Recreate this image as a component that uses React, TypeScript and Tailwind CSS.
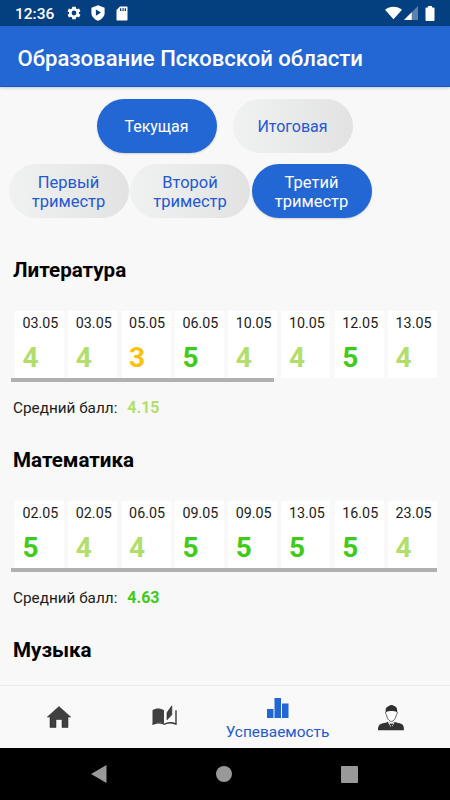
import { useState } from "react";
import { cva } from "class-variance-authority";
import { clsx } from "clsx";

interface Mark {
  date: string;
  value: number;
}

interface Subject {
  name: string;
  marks: Mark[];
  average: string;
  scrollClass: string;
}

const subjects: Subject[] = [
  {
    name: "Литература",
    average: "4.15",
    scrollClass: "w-[263px]",
    marks: [
      { date: "03.05", value: 4 },
      { date: "03.05", value: 4 },
      { date: "05.05", value: 3 },
      { date: "06.05", value: 5 },
      { date: "10.05", value: 4 },
      { date: "10.05", value: 4 },
      { date: "12.05", value: 5 },
      { date: "13.05", value: 4 },
    ],
  },
  {
    name: "Математика",
    average: "4.63",
    scrollClass: "w-[426px]",
    marks: [
      { date: "02.05", value: 5 },
      { date: "02.05", value: 4 },
      { date: "06.05", value: 4 },
      { date: "09.05", value: 5 },
      { date: "09.05", value: 5 },
      { date: "13.05", value: 5 },
      { date: "16.05", value: 5 },
      { date: "23.05", value: 4 },
    ],
  },
  { name: "Музыка", average: "", scrollClass: "", marks: [] },
];

const periods = ["Первый триместр", "Второй триместр", "Третий триместр"];

function markColor(value: number) {
  if (value >= 4.5) return "text-[#3fcb18]";
  if (value >= 3.5) return "text-[#b1de6c]";
  return "text-[#ffc107]";
}

const pill = cva(
  "flex h-[54px] w-[120px] items-center justify-center rounded-full px-4 pt-[2px] text-center leading-[19px]",
  {
    variants: {
      active: {
        true: "bg-[#2367d5] text-white shadow-[0_1px_2px_rgba(0,0,0,0.15)]",
        false: "bg-linear-to-r from-[#f0f2f2] to-[#e2e2e3] text-[#2359d3]",
      },
      size: {
        view: "text-[16px]",
        period: "text-[16.5px]",
      },
    },
  },
);

function StatusBar() {
  return (
    <div className="flex h-[26px] shrink-0 items-center bg-[#04407f] pr-[15px] pl-[15px] text-white">
      <span className="w-[40px] pt-[3px] text-[15.5px] leading-none font-medium">12:36</span>
      <svg className="ml-[11px] size-4" viewBox="0 0 24 24" fill="currentColor">
        <path d="M19.4 13a7.5 7.5 0 0 0 0-2l2.3-1.8-2.2-3.9-2.8 1.1a8 8 0 0 0-1.7-1L14.6 2.5H9.4L9 5.4a8 8 0 0 0-1.7 1L4.5 5.3 2.3 9.2 4.6 11a7.5 7.5 0 0 0 0 2l-2.3 1.8 2.2 3.9 2.8-1.1a8 8 0 0 0 1.7 1l.4 2.9h5.2l.4-2.9a8 8 0 0 0 1.7-1l2.8 1.1 2.2-3.9zM12 15.6a3.6 3.6 0 1 1 0-7.2 3.6 3.6 0 0 1 0 7.2z" />
      </svg>
      <svg className="ml-2 size-4" viewBox="0 0 16 16">
        <path d="M8 .3 14.6 2.8v5.2c0 3.4-2.7 6.2-6.6 7.8-3.9-1.6-6.6-4.4-6.6-7.8V2.8z" fill="currentColor" />
        <path d="M5.9 4.5v6.2L11 7.6z" fill="#04407f" />
      </svg>
      <svg className="ml-[10px] h-[15px] w-3" viewBox="0 0 12 15">
        <path d="M4 .5h6.5c.6 0 1 .4 1 1v12c0 .6-.4 1-1 1h-9c-.6 0-1-.4-1-1V4z" fill="currentColor" />
        <path d="M4 2.2h1.3v2.8H4zm2.400 0h1.300v2.800H6.400zm2.300 0H10v2.800H8.700z" fill="#04407f" />
      </svg>
      <svg className="ml-auto h-[14px] w-[17px]" viewBox="0 0 18 14" fill="currentColor">
        <path d="M0 3.5C5 -.7 13 -.7 18 3.5L9 13.5z" />
      </svg>
      <svg className="ml-[2px] h-[14px] w-[14px]" viewBox="0 0 14 14" fill="currentColor">
        <path d="M14 0v14H0z" opacity=".35" />
        <path d="M7.7 6.3V14H0z" />
      </svg>
      <svg className="ml-[7px] h-[15px] w-[10px]" viewBox="0 0 10 15" fill="currentColor">
        <path d="M3 0h4v1.6h1.5c.5 0 1 .4 1 1V14c0 .5-.5 1-1 1h-7c-.5 0-1-.5-1-1V2.600c0-.6.5-1 1-1H3z" />
      </svg>
    </div>
  );
}

function SubjectBlock({ subject }: { subject: Subject }) {
  return (
    <section className="h-[190.3px] shrink-0">
      <h2 className="pl-[13px] text-[20.6px] leading-6 font-bold text-black">{subject.name}</h2>
      {subject.marks.length > 0 && (
        <>
          <div className="mt-[29px] flex gap-[4.3px] pl-[15px]">
            {subject.marks.map((mark, i) => (
              <div key={i} className="h-[67px] w-[49px] shrink-0 bg-white pt-1 pl-[7.5px]">
                <p className="text-[14.3px] leading-4 text-[#1c1c1c]">{mark.date}</p>
                <p className={clsx("mt-[11px] text-[28px] leading-8 font-bold", markColor(mark.value))}>
                  {mark.value}
                </p>
              </div>
            ))}
          </div>
          <div className={clsx("ml-[11px] h-[4.5px] bg-[#b0b0b0]", subject.scrollClass)} />
          <p className="mt-[15.7px] flex gap-[10px] pl-[13px] text-[15.3px] leading-5 text-[#1c1c1c]">
            <span>Средний балл:</span>
            <span className={clsx("text-[16px] font-bold", markColor(Number(subject.average)))}>
              {subject.average}
            </span>
          </p>
        </>
      )}
    </section>
  );
}

function BottomNav() {
  return (
    <nav className="flex h-[63px] shrink-0 items-center border-t border-[#ececec] bg-[#f9f9f9] pl-[2px] text-[#404040]">
      <button className="flex w-[114px] justify-center" aria-label="Главная">
        <svg className="h-[22px] w-6" viewBox="0 0 24 22" fill="currentColor" stroke="#222" strokeWidth=".5">
          <path d="M12 .5 23.7 11H21v10.500h-6V13.500H9v8H3V11H.3z" />
        </svg>
      </button>
      <button className="flex w-[97px] justify-center" aria-label="Дневник">
        <svg className="mb-[3px] h-[21px] w-[25px]" viewBox="0 0 25 21">
          <path d="M.5 5.2C3.5 3 8.500 3 12 5.200v13.300c-3.500-1.500-7.500-1.500-11.500.8z" fill="#404040" />
          <path d="M.5 19.300c4.500-2.100 8-2.100 11.800 0 3.700-2.100 7.300-2.100 11.700-.2V5.200" fill="none" stroke="#2c2c2c" strokeWidth="1.300" />
          <path d="M15 7.600 19.800.8v9L15 14.800z" fill="#404040" stroke="#222" strokeWidth=".6" />
        </svg>
      </button>
      <button className="flex w-[129px] flex-col items-center pt-[5px] text-[#2359d3]">
        <svg className="h-5 w-[22px]" viewBox="0 0 22 20" fill="#2367d5">
          <path d="M0 11h6.500v9H0zM7.500 0H14v20H7.500zM15 5.500h6.500V20H15z" />
        </svg>
        <span className="mt-1 text-[15.4px] leading-5">Успеваемость</span>
      </button>
      <button className="flex w-[98px] justify-center" aria-label="Профиль">
        <svg className="h-[27px] w-[26px]" viewBox="0 0 26 26">
          <path d="M8 7c-.8.5-.5 3 .5 3.300.6 3.500 2.600 6.600 4.900 6.600s4.300-3.100 4.900-6.600c1-.3 1.300-2.800.5-3.300" fill="#fff" stroke="#333" strokeWidth=".8" />
          <path d="M8 7.700C6.800 3.500 9 2.200 11 1.500c.8-1 2.500-1.300 3.700-.7 3.200.9 5.200 3 4.300 6.900-1.800-.8-3.500-1.100-5.500-1.100s-3.700.3-5.500 1.100z" fill="#303030" />
          <path d="M0 25.800c0-4.600 1.300-6 4.800-7 2-.6 3.800-.8 4.800-1.600l3.700 1.700 3.700-1.700c1 .8 2.800 1 4.800 1.600 3.300 1 4.200 2.400 4.200 7z" fill="#333" />
          <path d="m9.700 17.400 3.500 6L16.800 17.400l-3.500 1.700z" fill="#fff" />
          <path d="m12 18.800 1.300.8 1.300-.8.5 1.400-1.200.5.3 2.500-.9 1.200-.9-1.200.3-2.500-1.200-.5z" fill="#333" />
        </svg>
      </button>
    </nav>
  );
}

function SystemNav() {
  return (
    <div className="flex h-[52px] shrink-0 items-center justify-between bg-black pr-[92px] pl-[91px]">
      <svg className="h-[18px] w-4" viewBox="0 0 16 18" fill="#999">
        <path d="M15.5 0v18L0 9z" />
      </svg>
      <div className="size-4 rounded-full bg-[#999]" />
      <div className="size-[17px] rounded-[1px] bg-[#999]" />
    </div>
  );
}

export default function App() {
  const [view, setView] = useState("Текущая");
  const [period, setPeriod] = useState(2);

  return (
    <div className="flex h-[800px] w-[450px] flex-col overflow-hidden bg-[#f8f8f8] font-['Roboto','Liberation_Sans',sans-serif]">
      <StatusBar />
      <header className="flex h-[61px] shrink-0 items-center border-b border-[#0b5bd3] bg-[#2367d5] pt-[3px] pl-[17.5px] shadow-[0_1px_3px_rgba(0,0,0,0.2)]">
        <h1 className="text-[22.1px] leading-7 font-medium whitespace-nowrap text-white">
          Образование Псковской области
        </h1>
      </header>

      <main className="flex min-h-0 flex-1 flex-col overflow-hidden pt-[11.5px]">
        <div className="flex shrink-0 justify-center gap-4 pr-[1px]">
          {["Текущая", "Итоговая"].map((label) => (
            <button
              key={label}
              onClick={() => setView(label)}
              className={pill({ active: view === label, size: "view" })}
            >
              {label}
            </button>
          ))}
        </div>
        <div className="mt-[11px] flex shrink-0 gap-[1.5px] pl-[8.5px]">
          {periods.map((label, i) => (
            <button
              key={label}
              onClick={() => setPeriod(i)}
              className={pill({ active: period === i, size: "period" })}
            >
              {label}
            </button>
          ))}
        </div>
        <div className="mt-10 flex flex-col">
          {subjects.map((subject) => (
            <SubjectBlock key={subject.name} subject={subject} />
          ))}
        </div>
      </main>

      <BottomNav />
      <SystemNav />
    </div>
  );
}
